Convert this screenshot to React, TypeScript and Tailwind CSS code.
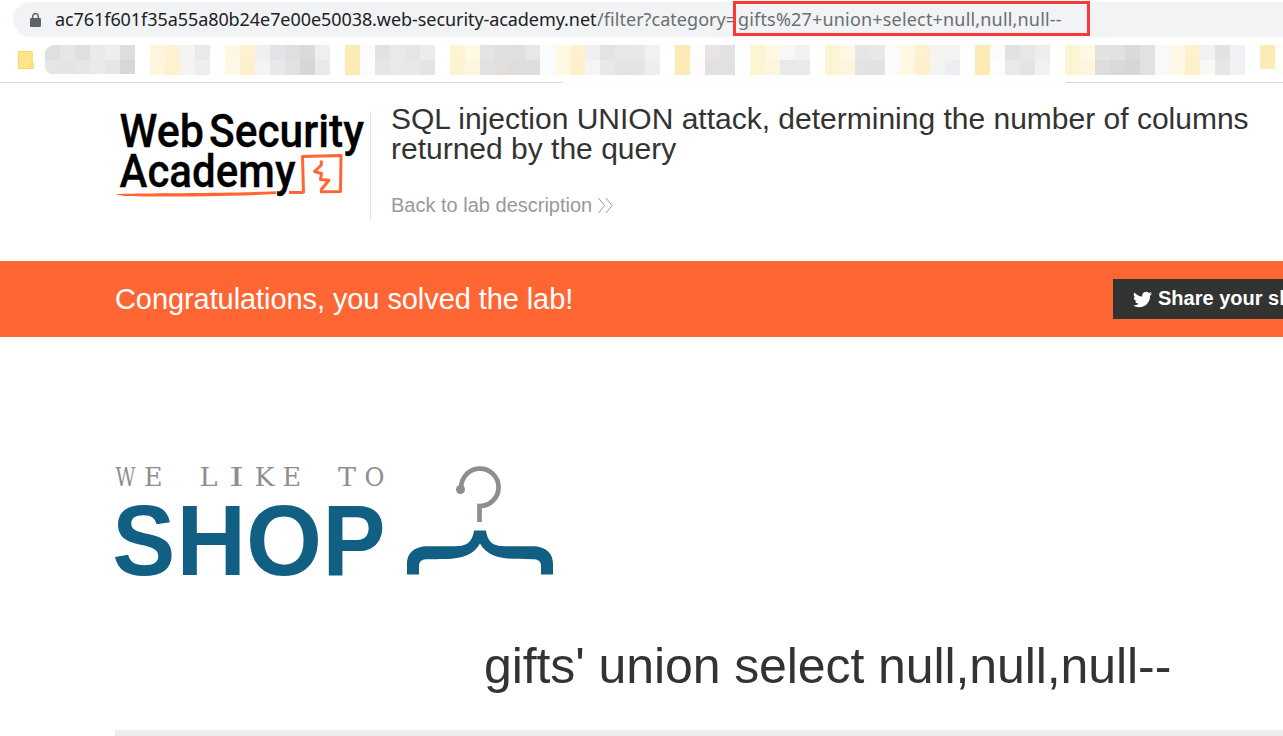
// Each bookmark column is 15px wide: [upper cell, lower cell].
const columns: [string, string][] = [
  ["#dfdfe0", "#e5e5e6"], ["#e6e6e6", "#e2e5e5"], ["#dee1e0", "#e6e6e6"], ["#eaeaeb", "#e9ebeb"], ["#eeeeee", "#e6e6e7"], ["#dddddf", "#d7d7da"], ["#fff", "#fff"],
  ["#fff5dd", "#fef6de"], ["#fdf3d4", "#fdf1ce"], ["#f4f4f5", "#f4f4f5"], ["#e9e9ea", "#eeeeef"], ["#fefefe", "#fefefe"],
  ["#fff7e4", "#fff8e6"], ["#fdf1cf", "#fdf0cb"], ["#f2f0ef", "#f4f4f5"], ["#e2e3e6", "#e8e8e9"], ["#dfdfe0", "#e1e1e3"], ["#dadadb", "#d6d6d7"], ["#eeeff1", "#e9eaee"], ["#fff", "#fff"],
  ["#fdebb5", "#fdeab5"], ["#fdfcfa", "#fdfcfb"], ["#e2e2e3", "#e6e6e7"], ["#e9e9ea", "#e9e9ea"], ["#e5e5e6", "#e8e8e8"], ["#ececed", "#e3e5e5"], ["#fff", "#fff"],
  ["#fdf4d1", "#fdf3d0"], ["#fff8e4", "#fdf5dd"], ["#e4e4e5", "#e2e2e3"], ["#e0e0e1", "#e1dedc"], ["#dfdfe0", "#dddddf"], ["#e7e7e8", "#dedee0"], ["#f9fcfc", "#f9fbfc"],
  ["#fff8e5", "#fff8e5"], ["#fdf1cf", "#fdf0cb"], ["#f2efee", "#f5f5f5"], ["#e2e3e5", "#e8e8e9"], ["#e7e7e8", "#e4e3e1"], ["#e8e8e9", "#e4e4e5"], ["#f0f1f2", "#eeeeef"], ["#fff", "#fff"],
  ["#fdebb5", "#fdebb5"], ["#fefdfd", "#fdfcfa"], ["#e8e4e3", "#e1e1e2"], ["#e0e2e4", "#e0e1e1"], ["#fff", "#fff"],
  ["#fdf4d1", "#fdf4d1"], ["#fff8e4", "#fdf5dd"], ["#f6f7f6", "#e9e9ea"], ["#f1f3f3", "#e9eaea"], ["#fff", "#fff"],
  ["#fdf4d1", "#fdf4d1"], ["#fff8e4", "#fdf5dd"], ["#e4e7e6", "#e3e3df"], ["#e8e8e8", "#e2e2e5"], ["#fbfbfc", "#fbfbfc"],
  ["#fff8e4", "#fff8e5"], ["#fdf1cf", "#fdf0cb"], ["#f4f4f1", "#f3f3f1"], ["#f3f3f4", "#eeeef2"], ["#fff", "#fff"],
  ["#fdebb5", "#fdebb5"], ["#fdfaf9", "#fefdfd"], ["#e0e2e5", "#e9e9ea"], ["#e7e7e8", "#e4e4e3"], ["#ededee", "#f1f1f1"], ["#fff", "#fff"],
  ["#fdf4d1", "#fdf4d1"], ["#fff8e4", "#fdf5dd"], ["#e4e2e0", "#dedddb"], ["#e1e1e1", "#d9d9d9"], ["#dadad9", "#d6d6d6"], ["#dfe2e1", "#e0e1e1"], ["#f8fafa", "#f8fafa"],
  ["#fff8e4", "#fff8e4"], ["#fdf1cf", "#fdf0cb"], ["#f3f1f2", "#f8f8f5"], ["#e2e2e3", "#e6e6e7"], ["#eff1f4", "#f1f1f2"], ["#fff", "#fff"], ["#fdebb5", "#fdebb5"], ["#fffdf8", "#fffdf8"],
];

// Letter, x and advance width of each glyph in the shop wordmark.
const shopLetters: [string, number, number][] = [
  ["S", 112.2, 63], ["H", 176.6, 69.5], ["O", 246, 76], ["P", 322.6, 63],
];

const taglineLetters: [string, number, number][] = [
  ["W", 115.5, 20], ["E", 144, 18.5], ["L", 199.5, 18], ["I", 229, 15], ["K", 254.5, 20], ["E", 282.5, 18.5], ["T", 338, 18], ["O", 364.5, 20],
];

function AddressBar() {
  return (
    <div className="relative h-[37px] pt-[2px]">
      <div className="ml-[13px] flex h-[35px] items-center rounded-l-full bg-[#f1f3f4] pl-[17px] font-['Noto_Sans','Open_Sans',sans-serif] text-[18px] whitespace-nowrap">
        <svg className="mr-[14px] h-[14px] w-[11px] shrink-0" viewBox="0 0 11 14">
          <path d="M2.7 6V3.4a2.8 2.8 0 0 1 5.6 0V6" fill="none" stroke="#5f6368" strokeWidth="1.5" />
          <rect y="5" width="11" height="9" rx="1.2" fill="#5f6368" />
        </svg>
        <span className="w-[542px] shrink-0 tracking-[-0.07px] text-[#202124]">ac761f601f35a55a80b24e7e00e50038.web-security-academy.net</span>
        <span className="w-[141px] shrink-0 tracking-[0.05px] text-[#6b6e72]">/filter?category=</span>
        <span className="tracking-[0.18px] text-[#6b6e72]">gifts%27+union+select+null,null,null--</span>
      </div>
      <div className="absolute top-[1px] left-[733px] h-[35px] w-[357px] border-[3px] border-[#fb3838]" />
    </div>
  );
}

function BookmarkBar() {
  return (
    <div className="h-[46px] overflow-hidden">
      <div className="flex h-[45px] pt-[8px]">
        <svg className="mt-[6px] ml-[18px] h-[19px] w-[16px] shrink-0" viewBox="0 0 16 19">
          <path d="M.5.5h13.700v10.800l1 .8v5.400H.5z" fill="#ffe58e" stroke="#fbd558" />
          <path d="M12.300 17.500v-4.200l1.900-1.800" fill="none" stroke="#fbd558" />
        </svg>
        <div className="ml-[11px] flex h-[30px] shrink-0 overflow-hidden rounded-l-[9px]">
          {columns.map(([upper, lower], i) => (
            <div key={i} className="w-[15px] shrink-0">
              <div className="h-[15px]" style={{ background: upper }} />
              <div className={i === 81 ? "h-[9px]" : i < 6 ? "h-[14px]" : "h-[15px]"} style={{ background: lower }} />
            </div>
          ))}
        </div>
      </div>
      <div className="flex h-px justify-between">
        <div className="w-[562px] bg-[#d9dadb]" />
        <div className="w-[504px] bg-[#fcfcfc]" />
        <div className="w-[217px] bg-[#d9dadb]" />
      </div>
    </div>
  );
}

function AcademyLogo() {
  return (
    <svg className="h-[100px] w-[255px] shrink-0" viewBox="115 105 255 100">
      <g fill="#000" stroke="#000" strokeWidth="0.3" fontFamily="Roboto, sans-serif" fontWeight="500" fontSize="47">
        <text x="119.500" y="147" textLength="84.500" lengthAdjust="spacingAndGlyphs">Web</text>
        <text x="209" y="147" textLength="155" lengthAdjust="spacingAndGlyphs">Security</text>
        <text x="119.500" y="187" textLength="176" lengthAdjust="spacingAndGlyphs">Academy</text>
      </g>
      <g fill="none" stroke="#ff6633" strokeWidth="3" strokeLinejoin="round">
        <path d="M303.500 193 302.500 156.500 341 155.500 340.500 191.500 320 191.700" />
        <path d="M321.300 160.500V165L314.500 171.500 321.500 173.500 320.500 179.500 329 180.200 320.500 190.500" />
        <path d="M289 192.500 303.500 192.500" />
      </g>
      <path d="M115.500 194.200C125 192.800 220 193.600 276 191.200V194C230 196.500 140 197 124 196Z" fill="#ff6633" />
    </svg>
  );
}

function ShopLogo() {
  return (
    <svg className="block h-[120px] w-[445px]" viewBox="112 460 445 120">
      <g fontFamily="'DejaVu Serif', serif" fontSize="26.500" fill="#8d8e90">
        {taglineLetters.map(([letter, x, width], i) => (
          <text key={i} x={x} y="486" textLength={width} lengthAdjust="spacingAndGlyphs">{letter}</text>
        ))}
      </g>
      <g fontFamily="'Liberation Sans', Arial, sans-serif" fontWeight="700" fontSize="101" fill="#115f83">
        {shopLetters.map(([letter, x, width]) => (
          <text key={letter} x={x} y="574.500" textLength={width} lengthAdjust="spacingAndGlyphs">{letter}</text>
        ))}
      </g>
      <circle cx="460.500" cy="489.500" r="4.500" fill="#8d8e90" />
      <path d="M461.300 489.500A18.700 18.700 0 1 1 479.500 506V522" fill="none" stroke="#8d8e90" strokeWidth="4.700" />
      <path d="M474 530.500H486C488 544 495 546.200 506 546.200H531C547 546 553 554 553 564V574.500H541V566C541 561 538 559.300 532 559.300C510 558.700 490 561 480 543.500C470 561 450 558.700 428 559.300C422 559.300 419 561 419 566V574.500H407V564C407 554 413 546 429 546.200H454C465 546.200 472 544 474 530.500Z" fill="#115f83" />
    </svg>
  );
}

function LabHeader() {
  return (
    <header className="flex h-[178px] pl-[115px]">
      <div className="mt-[28px] flex h-[108px] w-[256px] items-start border-r border-[#e2e2e3]">
        <div className="-mt-[6px]"><AcademyLogo /></div>
      </div>
      <div className="pt-[21px] pl-[20px] text-[#333332]">
        <h1 className="w-[880px] text-[30px] leading-[30px]">SQL injection UNION attack, determining the number of columns<br />returned by the query</h1>
        <a className="mt-[29px] flex items-center text-[20px] leading-[24px] text-[#999999]">
          Back to lab description
          <svg className="ml-[6px] h-[17px] w-[15px]" viewBox="0 0 15 17" fill="none" stroke="#999999" strokeWidth="1"><path d="M.5 1 6.500 8.500.5 16M8 1l6 7.500L8 16" /></svg>
        </a>
      </div>
    </header>
  );
}

export default function App() {
  return (
    <div className="h-[736px] w-[1283px] overflow-hidden bg-white font-['Liberation_Sans',Arial,sans-serif]">
      <AddressBar />
      <BookmarkBar />
      <LabHeader />
      <section className="flex h-[76px] items-center justify-between bg-[#ff6633] pl-[115px]">
        <p className="text-[29px] leading-[32px] tracking-[-0.08px] text-white">Congratulations, you solved the lab!</p>
        <button className="flex h-[40px] w-[170px] items-center overflow-hidden bg-[#333332] pb-[2px] pl-[20px] text-[20px] font-bold whitespace-nowrap text-white">
          <svg className="mt-[2px] mr-[6px] h-[19px] w-[19px] shrink-0" viewBox="0 0 24 24" fill="white"><path d="M23.950 4.570a10 10 0 0 1-2.820.770 4.960 4.960 0 0 0 2.160-2.720c-.950.550-2 .950-3.130 1.180a4.920 4.920 0 0 0-8.380 4.480C7.690 8.090 4.070 6.130 1.640 3.160a4.820 4.820 0 0 0-.670 2.480c0 1.710.870 3.210 2.190 4.100a4.900 4.900 0 0 1-2.230-.620v.060a4.920 4.920 0 0 0 3.950 4.830 5 5 0 0 1-2.210.080 4.940 4.940 0 0 0 4.600 3.420A9.870 9.870 0 0 1 0 19.540a14 14 0 0 0 7.550 2.210c9.050 0 14-7.500 14-13.980 0-.210 0-.420-.020-.630a9.940 9.940 0 0 0 2.460-2.550z" /></svg>
          <span className="shrink-0">Share your skills!</span>
        </button>
      </section>
      <main className="pt-[123px] pl-[112px]">
        <ShopLogo />
        <h2 className="mt-[57px] pl-[372px] text-[50px] leading-[58px] tracking-[-0.09px] whitespace-nowrap text-[#333332]">gifts' union select null,null,null--</h2>
        <div className="mt-[35px] ml-[3px] h-[6px] bg-[#ebeff2]" />
      </main>
    </div>
  );
}
